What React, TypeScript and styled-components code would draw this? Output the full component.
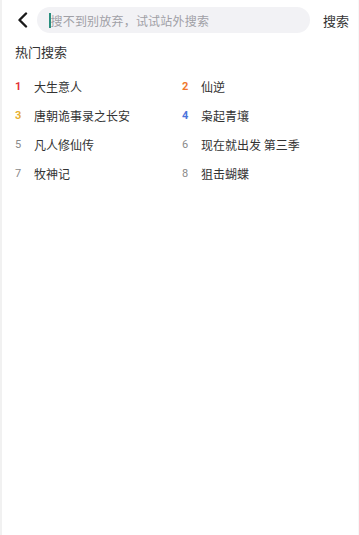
import React from "react";
import styled, { createGlobalStyle } from "styled-components";

const Global = createGlobalStyle`
  html, body { margin: 0; padding: 0; background: #fff; }
  body { font-family: "Noto Sans CJK SC", "Noto Sans", sans-serif; }
`;

const Page = styled.div`
  width: 359px;
  height: 535px;
  box-sizing: border-box;
  border-left: 2px solid #f1f1f1;
  border-right: 1px solid #f7f7f7;
  background: #fff;
  overflow: hidden;
`;

const TopBar = styled.div`
  display: flex;
  align-items: center;
  height: 26px;
  padding: 7px 0 0 0;
`;

const Back = styled.button`
  width: 35px;
  height: 26px;
  border: none;
  background: none;
  padding: 0 0 0 15px;
  display: flex;
  align-items: center;
`;

const SearchBox = styled.div`
  flex: 0 0 273px;
  height: 26px;
  border-radius: 13px;
  background: #f2f2f5;
  display: flex;
  align-items: center;
  padding-left: 12px;
  box-sizing: border-box;
`;

const Caret = styled.span`
  width: 1.5px;
  height: 15px;
  background: #2a8f7f;
`;

const Placeholder = styled.span`
  font-size: 12px;
  color: #a0a0a6;
  letter-spacing: 0.2px;
`;

const SearchBtn = styled.span`
  margin-left: 13px;
  font-size: 13px;
  color: #333;
`;

const Title = styled.div`
  margin: 10px 0 0 13px;
  font-size: 13px;
  color: #333;
  line-height: 18px;
`;

const Grid = styled.div`
  display: grid;
  grid-template-columns: 167px 1fr;
  row-gap: 11px;
  margin: 16px 0 0 13px;
`;

const Item = styled.div`
  display: flex;
  align-items: center;
  height: 18px;
`;

const Num = styled.span<{ $c: string; $bold: boolean }>`
  width: 19px;
  font-family: "Roboto", "Noto Sans", sans-serif;
  font-size: 11px;
  font-weight: ${(p) => (p.$bold ? 700 : 400)};
  color: ${(p) => p.$c};
`;

const Name = styled.span`
  font-size: 12px;
  color: #333;
`;

const items = [
  "大生意人",
  "仙逆",
  "唐朝诡事录之长安",
  "枭起青壤",
  "凡人修仙传",
  "现在就出发 第三季",
  "牧神记",
  "狙击蝴蝶",
];

const colors = ["#e2333a", "#f0782f", "#e8b031", "#4a75dc"];

export default function App() {
  return (
    <Page>
      <Global />
      <TopBar>
        <Back aria-label="back">
          <svg width="11" height="16" viewBox="0 0 11 16">
            <path d="M9 1.5L2.5 8L9 14.5" stroke="#1a1a1a" strokeWidth="2.4" fill="none" strokeLinecap="round" strokeLinejoin="round" />
          </svg>
        </Back>
        <SearchBox>
          <Caret />
          <Placeholder>搜不到别放弃，试试站外搜索</Placeholder>
        </SearchBox>
        <SearchBtn>搜索</SearchBtn>
      </TopBar>
      <Title>热门搜索</Title>
      <Grid>
        {items.map((t, i) => (
          <Item key={i}>
            <Num $c={colors[i] ?? "#8a8a8a"} $bold={i < 4}>{i + 1}</Num>
            <Name>{t}</Name>
          </Item>
        ))}
      </Grid>
    </Page>
  );
}
